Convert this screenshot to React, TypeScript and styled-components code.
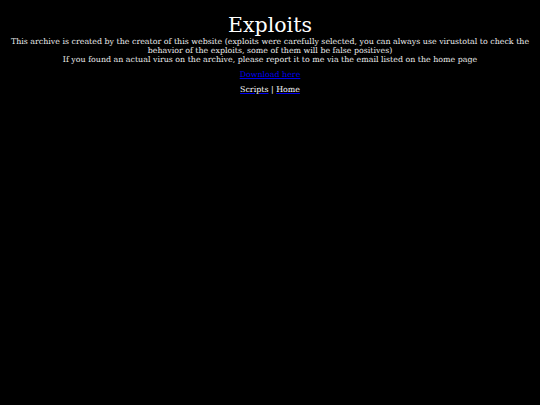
import React from "react";
import styled, { createGlobalStyle } from "styled-components";

const GlobalStyle = createGlobalStyle`
  html, body {
    margin: 0;
    padding: 0;
    background: #000000;
  }
  body {
    font-family: "DejaVu Serif", serif;
    color: #ffffff;
  }
`;

const Page = styled.div`
  display: flex;
  flex-direction: column;
  align-items: center;
  text-align: center;
  padding: 13px 8px 0;
  min-height: 405px;
  box-sizing: border-box;
  background: #000;
`;

const Title = styled.h1`
  margin: 0;
  font-size: 20.5px;
  font-weight: normal;
  line-height: 24px;
  color: #ffffff;
`;

const Notice = styled.p`
  margin: 0;
  font-size: 7.9px;
  line-height: 9px;
  color: #ececec;
`;

const DownloadLink = styled.a`
  display: block;
  margin-top: 6px;
  font-size: 7.9px;
  line-height: 9px;
  color: #0000ee;
`;

const Nav = styled.nav`
  margin-top: 6px;
  font-size: 7.9px;
  line-height: 9px;
  color: #ffffff;
`;

const NavLink = styled.a`
  color: #0000ee;
  & > span {
    color: #ffffff;
  }
`;

export default function App() {
  return (
    <>
      <GlobalStyle />
      <Page>
        <Title>Exploits</Title>
        <Notice>
          This archive is created by the creator of this website (exploits were
          carefully selected, you can always use virustotal to check the
          behavior of the exploits, some of them will be false positives)
          <br />
          If you found an actual virus on the archive, please report it to me
          via the email listed on the home page
        </Notice>
        <DownloadLink href="#">Download here</DownloadLink>
        <Nav>
          <NavLink href="#">
            <span>Scripts</span>
          </NavLink>{" "}
          |{" "}
          <NavLink href="#">
            <span>Home</span>
          </NavLink>
        </Nav>
      </Page>
    </>
  );
}
